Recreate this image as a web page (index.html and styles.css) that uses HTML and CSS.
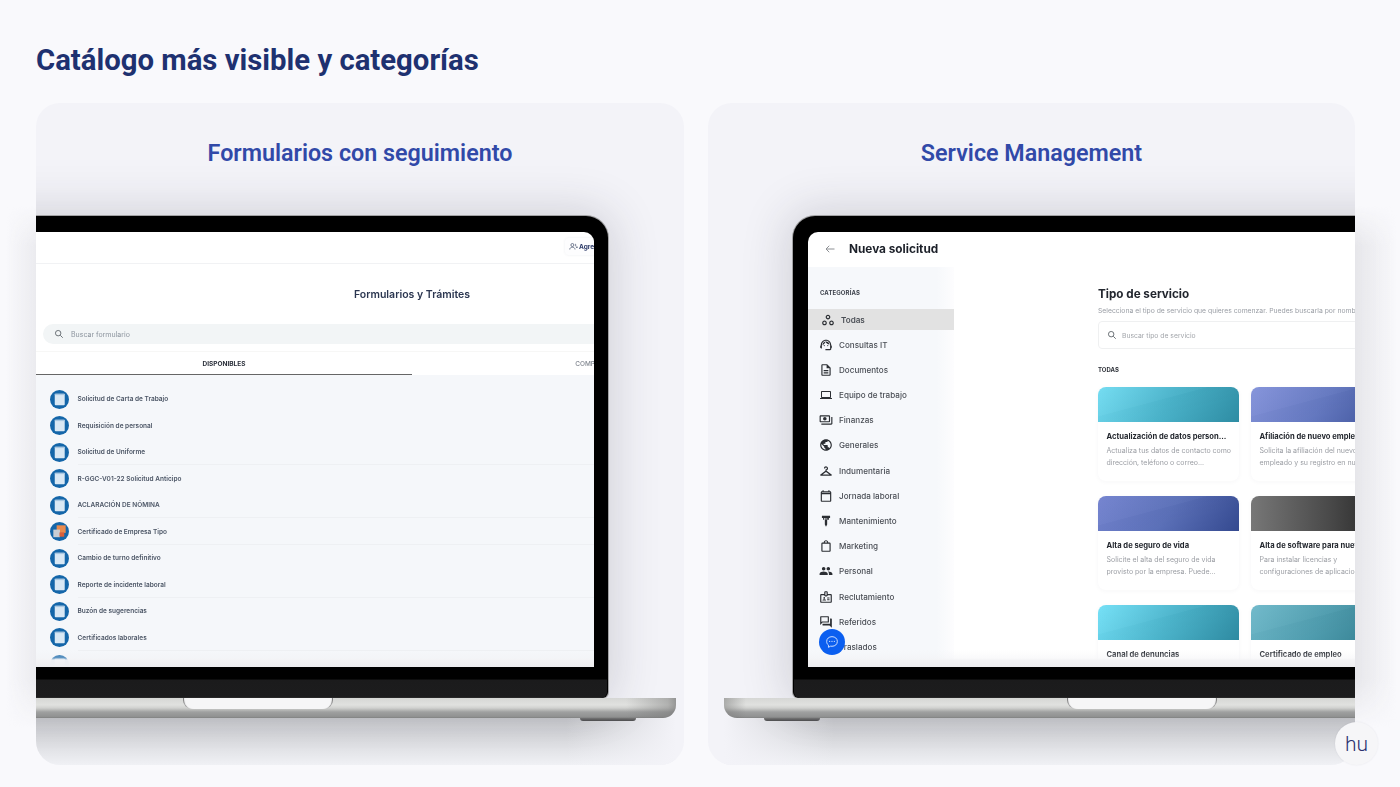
FILE: index.html
```html
<!DOCTYPE html>
<html lang="es">
<head>
<meta charset="utf-8">
<title>Catálogo más visible y categorías</title>
<link rel="stylesheet" href="styles.css">
</head>
<body>
<svg class="defs" width="0" height="0" aria-hidden="true">
  <symbol id="form" viewBox="0 0 20 20">
    <circle cx="10" cy="10" r="10" fill="#1466a9"/>
    <rect x="5" y="4" width="10.5" height="12" rx="1" fill="#d9e8f4"/>
    <rect x="5" y="4" width="10.5" height="1.4" fill="#a9c8e2"/>
  </symbol>
  <symbol id="form-alt" viewBox="0 0 20 20">
    <circle cx="10" cy="10" r="10" fill="#1466a9"/>
    <rect x="7" y="3.5" width="9.5" height="8" fill="#e98a4e"/>
    <rect x="3.5" y="8" width="7" height="8" fill="#c9ced4"/>
    <rect x="10" y="11" width="5" height="4.5" fill="#d95f3a"/>
  </symbol>
</svg>
<main class="page">
  <h1 class="page-title">Catálogo más visible y categorías</h1>
  <div class="panels">

    <section class="panel panel-left">
      <div class="card">
        <h2 class="card-title">Formularios con seguimiento</h2>
        <div class="device device-left">
          <div class="lid">
            <div class="screen">
              <div class="forms">
                <div class="forms-head">
                  <div class="add-btn">
                    <svg viewBox="0 0 24 24" class="add-icon"><circle cx="9" cy="8" r="4"/><path d="M2 20c0-4 3-6 7-6s7 2 7 6M16 5a3.500 3.500 0 0 1 0 6.500M19 14h4M21 12v4"/></svg>
                    <span>Agregar</span>
                  </div>
                </div>
                <div class="forms-title">Formularios y Trámites</div>
                <div class="forms-search">
                  <svg viewBox="0 0 24 24" class="search-icon"><circle cx="10" cy="10" r="6.500"/><path d="M15 15l6 6"/></svg>
                  <span>Buscar formulario</span>
                </div>
                <div class="tabs">
                  <div class="tab tab-active">DISPONIBLES</div>
                  <div class="tab">COMPLETADOS</div>
                </div>
                <div class="form-list">
                  <div class="form-row"><svg class="form-icon"><use href="#form"/></svg><span>Solicitud de Carta de Trabajo</span></div>
                  <div class="form-row"><svg class="form-icon"><use href="#form"/></svg><span>Requisición de personal</span></div>
                  <div class="form-row form-row-ruled"><svg class="form-icon"><use href="#form"/></svg><span>Solicitud de Uniforme</span></div>
                  <div class="form-row"><svg class="form-icon"><use href="#form"/></svg><span>R-GGC-V01-22 Solicitud Anticipo</span></div>
                  <div class="form-row form-row-ruled"><svg class="form-icon"><use href="#form"/></svg><span>ACLARACIÓN DE NÓMINA</span></div>
                  <div class="form-row form-row-ruled"><svg class="form-icon"><use href="#form-alt"/></svg><span>Certificado de Empresa Tipo</span></div>
                  <div class="form-row"><svg class="form-icon"><use href="#form"/></svg><span>Cambio de turno definitivo</span></div>
                  <div class="form-row form-row-ruled"><svg class="form-icon"><use href="#form"/></svg><span>Reporte de incidente laboral</span></div>
                  <div class="form-row"><svg class="form-icon"><use href="#form"/></svg><span>Buzón de sugerencias</span></div>
                  <div class="form-row form-row-ruled"><svg class="form-icon"><use href="#form"/></svg><span>Certificados laborales</span></div>
                  <div class="form-row"><svg class="form-icon"><use href="#form"/></svg></div>
                </div>
              </div>
              <div class="screen-fade"></div>
            </div>
            <div class="chin"></div>
          </div>
          <div class="base"><div class="notch"></div></div>
          <div class="floor"><i class="foot"></i><i class="foot"></i></div>
        </div>
      </div>
    </section>

    <section class="panel panel-right">
      <div class="card">
        <h2 class="card-title">Service Management</h2>
        <div class="device device-right">
          <div class="lid">
            <div class="screen">
              <div class="sm-head">
                <svg viewBox="0 0 24 24" class="back-icon"><path d="M21 12H4M10.500 5.500L4 12l6.500 6.500"/></svg>
                <span class="sm-title">Nueva solicitud</span>
              </div>
              <div class="sm-body">
                <aside class="sidebar">
                  <div class="side-label">CATEGORÍAS</div>
                  <div class="side-list">
                    <div class="side-row side-row-active"><svg class="cat-icon" viewBox="0 0 24 24"><path d="M6 13c-2.200 0-4 1.800-4 4s1.800 4 4 4 4-1.800 4-4-1.800-4-4-4zm0 6c-1.100 0-2-.9-2-2s.9-2 2-2 2 .9 2 2-.9 2-2 2zm6-16C9.800 3 8 4.800 8 7s1.800 4 4 4 4-1.800 4-4-1.800-4-4-4zm0 6c-1.100 0-2-.9-2-2s.9-2 2-2 2 .9 2 2-.9 2-2 2zm6 4c-2.200 0-4 1.800-4 4s1.800 4 4 4 4-1.800 4-4-1.800-4-4-4zm0 6c-1.100 0-2-.9-2-2s.9-2 2-2 2 .9 2 2-.9 2-2 2z"/></svg><span>Todas</span></div>
                    <div class="side-row"><svg class="cat-icon" viewBox="0 0 24 24"><path d="M21 12.220C21 6.730 16.740 3 12 3c-4.690 0-9 3.650-9 9.280-.6.340-1 .98-1 1.720v2c0 1.100.9 2 2 2h1v-6.100c0-3.870 3.130-7 7-7s7 3.130 7 7V19h-8v2h8c1.100 0 2-.9 2-2v-1.220c.59-.31 1-.92 1-1.640v-2.300c0-.7-.41-1.310-1-1.620z"/><circle cx="9" cy="13" r="1"/><circle cx="15" cy="13" r="1"/><path d="M18 11.030C17.520 8.180 15.040 6 12.050 6c-3.030 0-6.290 2.510-6.030 6.450 2.470-1.010 4.330-3.210 4.860-5.890 1.310 2.630 4 4.440 7.120 4.470z"/></svg><span>Consultas IT</span></div>
                    <div class="side-row"><svg class="cat-icon" viewBox="0 0 24 24"><path d="M8 16h8v2H8zm0-4h8v2H8zm6-10H6c-1.100 0-2 .9-2 2v16c0 1.100.89 2 1.990 2H18c1.100 0 2-.9 2-2V8l-6-6zm4 18H6V4h7v5h5v11z"/></svg><span>Documentos</span></div>
                    <div class="side-row"><svg class="cat-icon" viewBox="-2 -2 28 28"><path d="M20 18c1.100 0 1.990-.9 1.990-2L22 6c0-1.100-.9-2-2-2H4c-1.100 0-2 .9-2 2v10c0 1.100.9 2 2 2H0v2h24v-2h-4zM4 6h16v10H4V6z"/></svg><span>Equipo de trabajo</span></div>
                    <div class="side-row"><svg class="cat-icon" viewBox="0 0 24 24"><path d="M19 14V6c0-1.100-.9-2-2-2H3c-1.100 0-2 .9-2 2v8c0 1.100.9 2 2 2h14c1.100 0 2-.9 2-2zm-2 0H3V6h14v8zm-7-7c-1.660 0-3 1.340-3 3s1.340 3 3 3 3-1.340 3-3-1.340-3-3-3zm13 0v11c0 1.100-.9 2-2 2H4v-2h17V7h2z"/></svg><span>Finanzas</span></div>
                    <div class="side-row"><svg class="cat-icon" viewBox="0 0 24 24"><path d="M12 2C6.480 2 2 6.480 2 12s4.480 10 10 10 10-4.480 10-10S17.520 2 12 2zm-1 17.930c-3.950-.49-7-3.850-7-7.930 0-.62.08-1.210.21-1.790L9 15v1c0 1.100.9 2 2 2v1.930zm6.900-2.540c-.26-.81-1-1.390-1.900-1.390h-1v-3c0-.55-.45-1-1-1H8v-2h2c.55 0 1-.45 1-1V7h2c1.100 0 2-.9 2-2v-.41c2.930 1.190 5 4.060 5 7.410 0 2.080-.8 3.970-2.100 5.390z"/></svg><span>Generales</span></div>
                    <div class="side-row"><svg class="cat-icon" viewBox="0 0 24 24"><path d="M21.600 18.200 13 11.750v-.91c1.650-.49 2.800-2.170 2.430-4.050-.26-1.310-1.300-2.400-2.610-2.700C10.540 3.570 8.500 5.300 8.500 7.500h2c0-.83.67-1.500 1.500-1.500s1.500.67 1.500 1.500c0 .84-.69 1.520-1.530 1.500-.54-.01-.97.45-.97.99v1.760L2.400 18.200c-.77.58-.36 1.800.6 1.800h18c.96 0 1.370-1.220.6-1.800zM6 18l6-4.500 6 4.500H6z"/></svg><span>Indumentaria</span></div>
                    <div class="side-row"><svg class="cat-icon" viewBox="0 0 24 24"><path d="M19 4h-1V2h-2v2H8V2H6v2H5c-1.100 0-2 .9-2 2v14c0 1.100.9 2 2 2h14c1.100 0 2-.9 2-2V6c0-1.100-.9-2-2-2zm0 16H5V9h14v11zm0-13H5V6h14v1z"/></svg><span>Jornada laboral</span></div>
                    <div class="side-row"><svg class="cat-icon" viewBox="0 0 24 24"><path d="M5 3h14v4h-2v3h-3V7h-1v3h1v8l-2 4-2-4v-8h1V7H9v3H7V7H5z"/></svg><span>Mantenimiento</span></div>
                    <div class="side-row"><svg class="cat-icon" viewBox="0 0 24 24"><path d="M18 6h-2c0-2.210-1.790-4-4-4S8 3.790 8 6H6c-1.100 0-2 .9-2 2v12c0 1.100.9 2 2 2h12c1.100 0 2-.9 2-2V8c0-1.100-.9-2-2-2zm-6-2c1.100 0 2 .9 2 2h-4c0-1.100.9-2 2-2zm6 16H6V8h12v12z"/></svg><span>Marketing</span></div>
                    <div class="side-row"><svg class="cat-icon" viewBox="0 0 24 24"><path d="M16 11c1.660 0 2.990-1.340 2.990-3S17.660 5 16 5c-1.660 0-3 1.340-3 3s1.340 3 3 3zm-8 0c1.660 0 2.990-1.340 2.990-3S9.660 5 8 5C6.340 5 5 6.340 5 8s1.340 3 3 3zm0 2c-2.330 0-7 1.170-7 3.500V19h14v-2.500c0-2.330-4.670-3.500-7-3.500zm8 0c-.29 0-.62.02-.97.05 1.160.84 1.970 1.970 1.970 3.450V19h6v-2.500c0-2.330-4.670-3.500-7-3.500z"/></svg><span>Personal</span></div>
                    <div class="side-row"><svg class="cat-icon" viewBox="0 0 24 24"><path d="M20 7h-5V4c0-1.100-.9-2-2-2h-2c-1.100 0-2 .9-2 2v3H4c-1.100 0-2 .9-2 2v11c0 1.100.9 2 2 2h16c1.100 0 2-.9 2-2V9c0-1.100-.9-2-2-2zM11 4h2v5h-2V4zm9 16H4V9h5c0 1.100.9 2 2 2h2c1.100 0 2-.9 2-2h5v11zM9 15a1.500 1.500 0 1 0 0-3 1.500 1.500 0 0 0 0 3zm-3 3h6v-.5c0-1-2-1.500-3-1.500s-3 .5-3 1.500zm8-5h4v1.500h-4zm0 3h4v1.500h-4z"/></svg><span>Reclutamiento</span></div>
                    <div class="side-row"><svg class="cat-icon" viewBox="0 0 24 24"><path d="M15 4v7H5.170L4 12.170V4h11m1-2H3c-.55 0-1 .45-1 1v14l4-4h10c.55 0 1-.45 1-1V3c0-.55-.45-1-1-1zm5 4h-2v9H6v2c0 .55.45 1 1 1h11l4 4V7c0-.55-.45-1-1-1z"/></svg><span>Referidos</span></div>
                    <div class="side-row"><svg class="cat-icon" viewBox="0 0 24 24"><path d="M4 7h14v2H4zm2 8h14v2H6z"/></svg><span>Traslados</span></div>
                  </div>
                </aside>
                <div class="sm-main">
                  <div class="sm-main-title">Tipo de servicio</div>
                  <div class="sm-main-sub">Selecciona el tipo de servicio que quieres comenzar. Puedes buscarla por nombre</div>
                  <div class="sm-search">
                    <svg viewBox="0 0 24 24" class="search-icon"><circle cx="10" cy="10" r="6.500"/><path d="M15 15l6 6"/></svg>
                    <span>Buscar tipo de servicio</span>
                  </div>
                  <div class="sm-section">TODAS</div>
                  <div class="svc-grid">
                    <article class="svc">
                      <div class="svc-band band-teal"></div>
                      <h3 class="svc-name">Actualización de datos person...</h3>
                      <p class="svc-desc">Actualiza tus datos de contacto como<br>dirección, teléfono o correo...</p>
                    </article>
                    <article class="svc">
                      <div class="svc-band band-indigo"></div>
                      <h3 class="svc-name">Afiliación de nuevo empleado</h3>
                      <p class="svc-desc">Solicita la afiliación del nuevo<br>empleado y su registro en nuestro</p>
                    </article>
                    <article class="svc">
                      <div class="svc-band band-blue"></div>
                      <h3 class="svc-name">Alta de seguro de vida</h3>
                      <p class="svc-desc">Solicite el alta del seguro de vida<br>provisto por la empresa. Puede...</p>
                    </article>
                    <article class="svc">
                      <div class="svc-band band-graphite"></div>
                      <h3 class="svc-name">Alta de software para nuevos</h3>
                      <p class="svc-desc">Para instalar licencias y<br>configuraciones de aplicaciones</p>
                    </article>
                    <article class="svc">
                      <div class="svc-band band-sky"></div>
                      <h3 class="svc-name">Canal de denuncias</h3>
                    </article>
                    <article class="svc">
                      <div class="svc-band band-sea"></div>
                      <h3 class="svc-name">Certificado de empleo</h3>
                    </article>
                  </div>
                </div>
              </div>
              <div class="screen-fade"></div>
              <div class="fab">
                <svg viewBox="0 0 24 24"><path d="M12 4c-4.700 0-8 3-8 7.200 0 2.300 1 4.200 2.700 5.500V20l3.200-1.800c.7.1 1.400.2 2.100.2 4.700 0 8-3 8-7.200S16.700 4 12 4z"/><circle cx="8.500" cy="11.200" r=".9"/><circle cx="12" cy="11.200" r=".9"/><circle cx="15.500" cy="11.200" r=".9"/></svg>
              </div>
            </div>
            <div class="chin"></div>
          </div>
          <div class="base"><div class="notch"></div></div>
          <div class="floor"><i class="foot"></i><i class="foot"></i></div>
        </div>
      </div>
    </section>

  </div>
  <div class="hu-badge">hu</div>
</main>
</body>
</html>
```

FILE: styles.css
```css
* { box-sizing: border-box; }
html, body { margin: 0; height: 787px; overflow: hidden; }
body { background: #f9f9fc; font-family: "Inter", "Liberation Sans", sans-serif; }
.defs { position: absolute; }

.page { position: relative; height: 787px; padding: 42px 44px 0 36px; }
.page-title {
  margin: 0 0 25px;
  font: 700 29.300px/36px "Roboto", sans-serif;
  color: #1e3170;
}
.panels { display: grid; grid-template-columns: 648px 647px; column-gap: 24px; }

.panel { position: relative; }
.panel::after {
  content: "";
  position: absolute;
  top: 103px;
  height: 522px;
  -webkit-mask-image: linear-gradient(180deg, transparent, #000 40px, #000 calc(100% - 50px), transparent);
  mask-image: linear-gradient(180deg, transparent, #000 40px, #000 calc(100% - 50px), transparent);
}
.panel-left::after { left: -30px; width: 30px; background: linear-gradient(270deg, #ebebef, rgba(249,249,252,0)); }
.panel-right::after { right: -42px; width: 42px; background: linear-gradient(90deg, #e6e6ea, rgba(249,249,252,0)); }

.card {
  height: 662px;
  background: #f3f3f8;
  border-radius: 24px;
  overflow: hidden;
  position: relative;
  z-index: 1;
}
.card-title {
  margin: 0;
  padding-top: 36px;
  height: 113px;
  text-align: center;
  font: 600 23.300px/28px "Roboto", sans-serif;
  color: #3149a8;
}

.device { width: 836px; }
.device-left { margin-left: -196px; }
.device-right { margin-left: 16px; }

.lid {
  width: 700px;
  height: 482px;
  margin: 0 68px;
  padding: 16px 14px 0;
  background: #000;
  border-radius: 22px 22px 6px 6px;
  box-shadow: 0 0 0 1px #a2a2a4, 0 0 46px 6px rgba(40,40,60,.17);
  position: relative;
}
.device-right .lid { margin-left: 69px; }
.screen {
  position: relative;
  width: 672px;
  height: 435px;
  background: #fff;
  border-radius: 10px 10px 0 0;
  overflow: hidden;
  filter: blur(.25px);
}
.device-right .screen { margin-left: 1px; }
.chin {
  height: 31px;
  margin: 0 -13px;
  border-radius: 0 0 6px 6px;
  background: linear-gradient(180deg, #000 0, #000 12px, #1b1b1c 13px, #1c1c1d 30px, #333 31px);
}
.screen-fade {
  position: absolute;
  left: 0;
  right: 0;
  bottom: 0;
  height: 17px;
  background: linear-gradient(180deg, rgba(240,240,243,0) 0, rgba(240,240,243,.35) 8px, rgba(243,243,245,.97) 10px, #ededf0 100%);
}

.base {
  position: relative;
  z-index: 1;
  height: 20px;
  display: flex;
  justify-content: center;
  border-radius: 0 0 13px 13px;
  background:
    linear-gradient(90deg, rgba(120,120,120,.5), rgba(120,120,120,0) 22px, rgba(120,120,120,0) calc(100% - 50px), rgba(120,120,120,.45) calc(100% - 8px), rgba(120,120,120,.7)),
    linear-gradient(180deg, #d6d7d5 0, #e0e1df 7px, #d0d1cf 10px, #9fa0a0 14px, #8f9090 19px, #7c7d7d 20px);
}
.notch {
  width: 150px;
  height: 11px;
  background: #f6f6f7;
  border-radius: 0 0 9px 9px;
  box-shadow: inset 2px 0 1px -1px #777, inset -2px 0 1px -1px #777;
}
.floor {
  height: 47px;
  display: flex;
  justify-content: space-between;
  padding: 0 40px;
  background:
    linear-gradient(90deg, #f3f3f8, rgba(243,243,248,0) 110px, rgba(243,243,248,0) calc(100% - 110px), #f3f3f8),
    linear-gradient(180deg, #c5c6ca 0, #f0f1f5 100%);
}
.foot {
  width: 56px;
  height: 3px;
  background: linear-gradient(180deg, #777, #4d4d4f);
  border-radius: 0 0 6px 6px;
}

/* Formularios */
.forms { width: 752px; margin-left: 114px; }
.forms-head { height: 32px; border-bottom: 1px solid #f1f2f4; padding: 6px 0 0 529px; }
.add-btn {
  width: 60px;
  height: 17px;
  padding-left: 4px;
  display: flex;
  align-items: center;
  gap: 1px;
  border-radius: 4px;
  background: #fdfdfe;
  box-shadow: 0 0 3px rgba(30,40,80,.08);
  font: 700 6.500px "Inter", sans-serif;
  color: #2c3a68;
}
.add-icon { width: 9px; height: 9px; fill: none; stroke: #4a5570; stroke-width: 2; }
.forms-title {
  height: 60px;
  display: flex;
  align-items: center;
  justify-content: center;
  font: 600 10.500px "Inter", sans-serif;
  color: #2b3650;
}
.forms-search {
  height: 20px;
  margin-left: 7px;
  width: 738px;
  padding-left: 11px;
  display: flex;
  align-items: center;
  gap: 7px;
  background: #f2f5f6;
  border-radius: 10px;
  font: 400 7px "Inter", sans-serif;
  color: #8b939d;
}
.search-icon { width: 10px; height: 10px; fill: none; stroke: #6d7378; stroke-width: 2.400; flex: none; }
.tabs {
  margin-top: 8px;
  height: 23px;
  display: grid;
  grid-template-columns: 376px 376px;
  box-shadow: 0 -1px 0 #f7f7f6;
}
.tab {
  display: flex;
  align-items: center;
  justify-content: center;
  padding-top: 1px;
  font: 500 6.500px "Inter", sans-serif;
  color: #80868f;
}
.tab-active { color: #2a2f3a; font-weight: 700; border-bottom: 1.500px solid #666; }
.form-list { height: 295px; padding-top: 10.750px; background: #f5f7fa; }
.form-row {
  position: relative;
  height: 26.500px;
  padding-left: 14px;
  display: flex;
  align-items: center;
  gap: 8.500px;
  font: 600 6.500px "Inter", sans-serif;
  color: #4b5565;
}
.form-row-ruled::after {
  content: "";
  position: absolute;
  left: 42px;
  right: 0;
  bottom: 0;
  height: 1px;
  background: #eef0f3;
}
.form-icon { width: 19px; height: 19px; flex: none; }

/* Service Management */
.sm-head { height: 35px; padding: 0 0 2px 16px; display: flex; align-items: center; gap: 13px; }
.back-icon { width: 12px; height: 12px; fill: none; stroke: #8d9094; stroke-width: 2; }
.sm-title { font: 700 11.800px "Inter", sans-serif; color: #1c2029; }
.sm-body { display: flex; }
.sidebar {
  width: 146px;
  height: 400px;
  flex: none;
  background: linear-gradient(90deg, #f6f8fb 88%, #fdfdfe);
}
.side-label {
  padding: 22px 0 12px 12px;
  font: 700 6px/8px "Inter", sans-serif;
  color: #3d424c;
  letter-spacing: .1px;
}
.side-list { display: flex; flex-direction: column; row-gap: 4.200px; }
.side-row {
  height: 21px;
  padding-left: 12px;
  display: flex;
  align-items: center;
  gap: 7px;
  font: 500 8.100px "Inter", sans-serif;
  color: #4a4e55;
}
.side-row-active { padding-left: 14px; background: #e2e2e2; font-weight: 600; }
.cat-icon { width: 14px; height: 14px; margin: 0 -1px; fill: #2b2e33; flex: none; }

.sm-main { width: 537px; height: 400px; flex: none; padding: 19px 0 0 144px; }
.sm-main-title { font: 700 11.700px/16px "Inter", sans-serif; color: #22262e; }
.sm-main-sub { margin-top: 4px; font: 400 6.800px/10px "Inter", sans-serif; color: #9a9ea5; white-space: nowrap; }
.sm-search {
  width: 400px;
  height: 28px;
  margin-top: 5px;
  padding-left: 8px;
  display: flex;
  align-items: center;
  gap: 5px;
  border: 1px solid #eff0f1;
  border-radius: 4px;
  font: 400 6.800px "Inter", sans-serif;
  color: #a3a6ab;
}
.sm-section { margin-top: 17px; font: 700 6px/8px "Inter", sans-serif; color: #2d3138; }
.svc-grid {
  margin-top: 13px;
  display: grid;
  grid-template-columns: 141px 141px;
  grid-auto-rows: 94px;
  gap: 15px 12px;
}
.svc {
  border-radius: 8px;
  background: #fff;
  box-shadow: 0 1px 5px rgba(40,50,70,.04);
}
.svc-band { height: 34.500px; border-radius: 8px 8px 0 0; }
.band-teal {
  background:
    linear-gradient(165deg, rgba(255,255,255,.02) 40%, rgba(0,0,0,.012) 41%, rgba(0,0,0,0) 70%),
    linear-gradient(125deg, #72dcf2, #4ab2c9 50%, #2e8ca3);
}
.band-indigo {
  background:
    linear-gradient(165deg, rgba(255,255,255,.02) 40%, rgba(0,0,0,.012) 41%, rgba(0,0,0,0) 70%),
    linear-gradient(125deg, #8493da, #6478c0 50%, #3b5096);
}
.band-blue {
  background:
    linear-gradient(165deg, rgba(255,255,255,.02) 40%, rgba(0,0,0,.012) 41%, rgba(0,0,0,0) 70%),
    linear-gradient(125deg, #7383cf, #5b70b8 50%, #34498f);
}
.band-graphite { background: linear-gradient(90deg, #777, #4a4a4a 55%, #1f1f1f); }
.band-sky {
  background:
    linear-gradient(165deg, rgba(255,255,255,.02) 40%, rgba(0,0,0,.012) 41%, rgba(0,0,0,0) 70%),
    linear-gradient(125deg, #73e0f7, #4cb4cb 50%, #2e8aa1);
}
.band-sea {
  background:
    linear-gradient(165deg, rgba(255,255,255,.02) 40%, rgba(0,0,0,.012) 41%, rgba(0,0,0,0) 70%),
    linear-gradient(125deg, #6fb9ca, #4f9cae 50%, #2f7a8b);
}
.svc-name {
  margin: 10.500px 0 0 8.500px;
  font: 700 7.600px/10px "Inter", sans-serif;
  color: #23272e;
  white-space: nowrap;
}
.svc-desc {
  margin: 2.500px 0 0 8.500px;
  font: 400 7px/12px "Inter", sans-serif;
  color: #9a9da3;
  white-space: nowrap;
}
.fab {
  position: absolute;
  left: 11px;
  top: 397px;
  width: 26px;
  height: 26px;
  border-radius: 50%;
  background: #0b5ff0;
  display: flex;
  align-items: center;
  justify-content: center;
}
.fab svg { width: 16px; height: 16px; fill: none; stroke: #cfe0ff; stroke-width: 1.500; }
.fab circle { fill: #cfe0ff; stroke: none; }

.hu-badge {
  position: absolute;
  left: 1335px;
  top: 722px;
  z-index: 2;
  width: 43px;
  height: 43px;
  border-radius: 50%;
  background: #f6f6f8;
  box-shadow: 0 0 2px rgba(30,30,60,.08);
  display: flex;
  align-items: center;
  justify-content: center;
  font: 300 21px "Roboto", sans-serif;
  color: #2b3070;
}
```
